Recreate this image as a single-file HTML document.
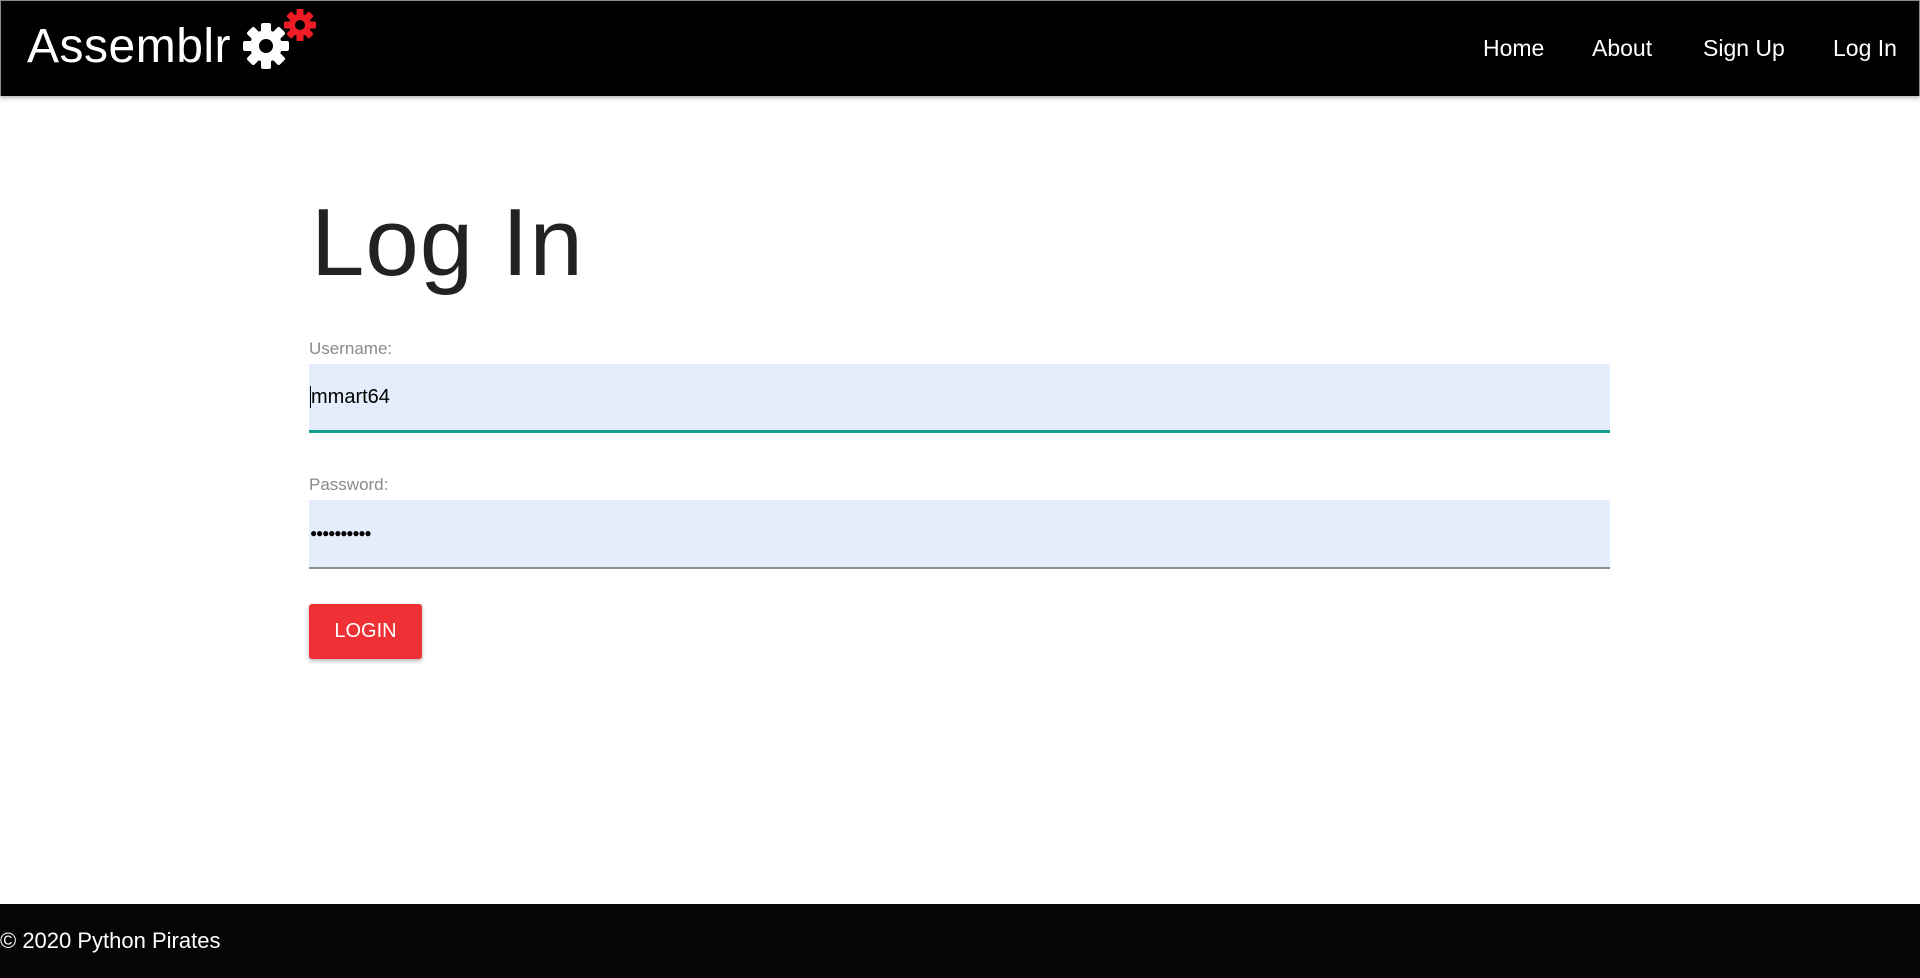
<!DOCTYPE html>
<html><head><meta charset="utf-8"><style>
*{box-sizing:border-box;margin:0;padding:0}
body{width:1920px;height:978px;overflow:hidden;background:#fff;font-family:"Liberation Sans",sans-serif;position:relative}
.nav{position:absolute;left:0;top:0;width:1920px;height:96px;background:#000;border:1px solid #888;border-bottom:none;box-shadow:0 2px 4px rgba(0,0,0,.3)}
.logo{position:absolute;left:26px;top:18px;color:#fff;font-size:48px;letter-spacing:0.5px}
.links a{position:absolute;top:34px;color:#fff;font-size:23px;text-decoration:none}
h1{position:absolute;left:311px;top:188px;font-size:96px;font-weight:normal;color:#222;letter-spacing:1px}
.lbl{position:absolute;left:309px;font-size:17px;color:#8a8a8a}
.inp{position:absolute;left:309px;width:1301px;height:69px;background:#e3edfc;font-size:20px;padding-left:1px;line-height:66px;color:#000}
.btn{position:absolute;left:309px;top:604px;width:113px;height:55px;background:#ef3034;color:#fff;border-radius:3px;font-size:20px;text-align:center;line-height:55px;box-shadow:0 2px 4px rgba(0,0,0,.3)}
.foot{position:absolute;left:0;top:904px;width:1920px;height:74px;background:#050505;color:#fff;font-size:22px;line-height:74px}
</style></head><body>
<div class="nav">
<div class="logo">Assemblr</div>
<svg style="position:absolute;left:240px;top:20px" width="50" height="50" viewBox="-25 -25 50 50">
<g fill="#fff"><circle r="16"/>
<g id="t"><rect x="-5" y="-23" width="10" height="10" rx="2"/></g>
<use href="#t" transform="rotate(45)"/><use href="#t" transform="rotate(90)"/><use href="#t" transform="rotate(135)"/><use href="#t" transform="rotate(180)"/><use href="#t" transform="rotate(225)"/><use href="#t" transform="rotate(270)"/><use href="#t" transform="rotate(315)"/></g>
<circle r="7" fill="#000"/></svg>
<svg style="position:absolute;left:282px;top:7px" width="34" height="34" viewBox="-17 -17 34 34">
<g fill="#ee1c24"><circle r="11"/>
<g id="r"><rect x="-3.5" y="-16" width="7" height="7" rx="1"/></g>
<use href="#r" transform="rotate(45)"/><use href="#r" transform="rotate(90)"/><use href="#r" transform="rotate(135)"/><use href="#r" transform="rotate(180)"/><use href="#r" transform="rotate(225)"/><use href="#r" transform="rotate(270)"/><use href="#r" transform="rotate(315)"/></g>
<circle r="5" fill="#000"/></svg>
<div class="links"><a style="left:1482px">Home</a><a style="left:1591px">About</a><a style="left:1702px">Sign Up</a><a style="left:1832px">Log In</a></div>
</div>
<h1>Log In</h1>
<div class="lbl" style="top:339px">Username:</div>
<div class="inp" style="top:364px;border-bottom:3px solid #139e8f"><span style="border-left:1px solid #000">mmart64</span></div>
<div class="lbl" style="top:475px">Password:</div>
<div class="inp" style="top:500px;border-bottom:2px solid #8f8f8f;font-size:12px;letter-spacing:-1.2px">●●●●●●●●●●</div>
<div class="btn">LOGIN</div>
<div class="foot">© 2020 Python Pirates</div>
</body></html>
